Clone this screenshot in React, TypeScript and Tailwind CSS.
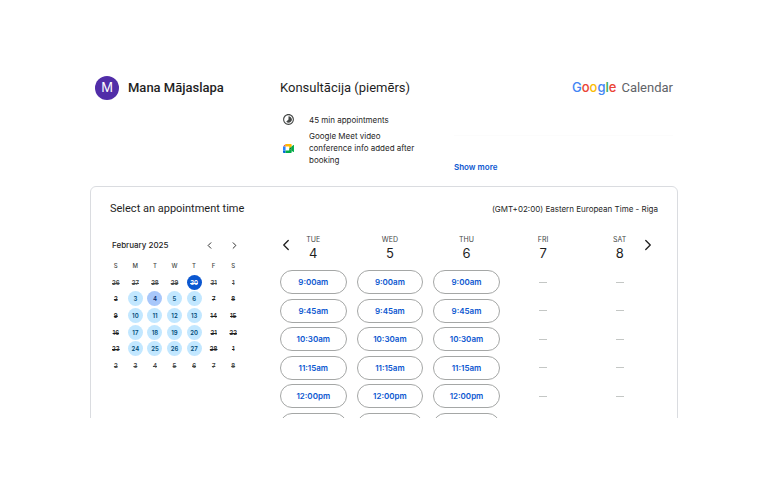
import clsx from "clsx";
import { ChevronLeft, ChevronRight } from "lucide-react";
import { MdTimelapse } from "react-icons/md";

const WEEKDAYS = ["S", "M", "T", "W", "T", "F", "S"];

const WEEKS = [
  [26, 27, 28, 29, 30, 31, 1],
  [2, 3, 4, 5, 6, 7, 8],
  [9, 10, 11, 12, 13, 14, 15],
  [16, 17, 18, 19, 20, 21, 22],
  [23, 24, 25, 26, 27, 28, 1],
  [2, 3, 4, 5, 6, 7, 8],
];

const TIMES = ["9:00am", "9:45am", "10:30am", "11:15am", "12:00pm"];

const DAYS = [
  { name: "TUE", date: 4, open: true },
  { name: "WED", date: 5, open: true },
  { name: "THU", date: 6, open: true },
  { name: "FRI", date: 7, open: false },
  { name: "SAT", date: 8, open: false },
];

export default function App() {
  return (
    <div className="flex h-screen flex-col overflow-hidden bg-white px-[90px] pt-[76px] pb-[67px] font-['Inter',sans-serif] text-[#1f1f1f]">
      <Header />
      <main className="min-h-0 flex-1 overflow-hidden">
        <section className="rounded-md border border-[#dadce0] px-[19px] pt-[11px] pb-4">
          <div className="flex items-center justify-between">
            <h2 className="font-['Roboto',sans-serif] text-[11px] leading-[22px]">
              Select an appointment time
            </h2>
            <p className="text-[8px]">
              (GMT+02:00) Eastern European Time - Riga
            </p>
          </div>
          <div className="mt-[14px] flex justify-between">
            <MonthPicker />
            <Schedule />
          </div>
        </section>
      </main>
    </div>
  );
}

function Header() {
  return (
    <header className="grid h-[110px] shrink-0 grid-cols-[185px_174px_1fr] px-[5px]">
      <div className="flex h-6 items-center gap-[9px]">
        <span className="flex size-6 items-center justify-center rounded-full bg-[#512da8] text-[13px] text-white">
          M
        </span>
        <span className="font-['Roboto',sans-serif] text-[13px] font-medium">
          Mana Mājaslapa
        </span>
      </div>

      <div>
        <h1 className="font-['Roboto',sans-serif] text-[13px] leading-6">
          Konsultācija (piemērs)
        </h1>
        <ul className="mt-[13px] space-y-1 text-[8px] leading-3">
          <li className="flex items-center">
            <MdTimelapse className="ml-[2px] size-[13px] text-[#444746]" />
            <span className="ml-[14px]">45 min appointments</span>
          </li>
          <li className="flex items-center">
            <MeetIcon />
            <span className="ml-[15px] w-[115px]">
              Google Meet video conference info added after booking
            </span>
          </li>
        </ul>
      </div>

      <div className="flex flex-col">
        <Logo />
        <div className="mt-[35px] border-t border-[#fcfcfc] pt-[25px]">
          <button
            type="button"
            className="block text-[8px] leading-3 font-semibold text-[#0b57d0]"
          >
            Show more
          </button>
        </div>
      </div>
    </header>
  );
}

function Logo() {
  return (
    <div className="flex h-6 items-center justify-end gap-[5px] text-[13px]">
      <span className="font-medium">
        <span className="text-[#4285f4]">G</span>
        <span className="text-[#ea4335]">o</span>
        <span className="text-[#fbbc04]">o</span>
        <span className="text-[#4285f4]">g</span>
        <span className="text-[#34a853]">l</span>
        <span className="text-[#ea4335]">e</span>
      </span>
      <span className="font-['Roboto',sans-serif] text-[#5f6368]">
        Calendar
      </span>
    </div>
  );
}

function MeetIcon() {
  return (
    <svg viewBox="0 0 88 72" className="ml-[3px] h-[9px] w-[11px] shrink-0">
      <path fill="#0066da" d="M0 51.5V66c0 3.3 2.7 6 6 6h14.5V51.5z" />
      <path fill="#e94235" d="M20.5 0L0 20.5h20.5z" />
      <path fill="#2684fc" d="M20.5 20.5H0v31h20.5z" />
      <path
        fill="#ffba00"
        d="M63.5 0h-43v20.5h29V36l20-16.6V6c0-3.3-2.7-6-6-6z"
      />
      <path
        fill="#00ac47"
        d="M82.6 8.7l-13.1 10.7v33.7l13.2 10.8c2 1.5 4.8.1 4.8-2.4V11c0-2.5-2.9-3.9-4.9-2.3zM49.5 36v15.5h-29V72h43c3.3 0 6-2.7 6-6V53.1z"
      />
      <path fill="#00832d" d="M49.5 36l20 17.1V19.4z" />
    </svg>
  );
}

function MonthPicker() {
  return (
    <div className="-ml-1 w-[137px] shrink-0 pt-[3px]">
      <div className="flex h-4 items-center pl-[6px]">
        <h3 className="flex-1 text-[8px] font-medium">February 2025</h3>
        <button type="button" aria-label="Previous month" className="mr-[14px]">
          <ChevronLeft className="size-[11px]" />
        </button>
        <button type="button" aria-label="Next month" className="mr-[3px]">
          <ChevronRight className="size-[11px]" />
        </button>
      </div>
      <div className="mt-1 grid h-[17px] grid-cols-7 place-items-center text-[6px] font-medium text-[#444746]">
        {WEEKDAYS.map((day, i) => (
          <span key={i}>{day}</span>
        ))}
      </div>
      <div className="grid h-[100px] grid-cols-7 grid-rows-6 place-items-center">
        {WEEKS.map((week, row) =>
          week.map((date, col) => (
            <DateCell key={`${row}-${col}`} date={date} row={row} col={col} />
          )),
        )}
      </div>
    </div>
  );
}

type DateCellProps = {
  date: number;
  row: number;
  col: number;
};

function DateCell({ date, row, col }: DateCellProps) {
  const today = row === 0 && col === 4;
  const available = row >= 1 && row <= 4 && col >= 1 && col <= 4;
  const selected = row === 1 && col === 2;

  return (
    <button
      type="button"
      disabled={!available}
      className={clsx(
        "flex size-[15px] items-center justify-center rounded-full text-[6px] font-semibold",
        !available && "line-through",
        today && "bg-[#0b57d0] text-white",
        selected && "bg-[#a8c7fa] text-[#062e6f]",
        available && !selected && "bg-[#c2e7ff] text-[#004a77]",
        (row === 0 || row === 5) && !today && "text-[#444746]",
      )}
    >
      {date}
    </button>
  );
}

const slotClass =
  "h-6 rounded-full border border-[#a5a7a6] text-[8px] font-semibold text-[#0b57d0]";

function Schedule() {
  return (
    <div className="relative w-[383px]">
      <div className="grid grid-cols-5">
        {DAYS.map((day) => (
          <div key={day.name} className="text-center">
            <div className="h-[34px]">
              <p className="text-[7px] leading-3 text-[#444746]">{day.name}</p>
              <p className="text-[13px] leading-[14px]">{day.date}</p>
            </div>
            <div className="grid h-[171px] grid-rows-6 items-center px-[5px]">
              {TIMES.map((time) =>
                day.open ? (
                  <button key={time} type="button" className={slotClass}>
                    {time}
                  </button>
                ) : (
                  <span
                    key={time}
                    className="h-px w-2 justify-self-center bg-[#c4c7c5]"
                  />
                ),
              )}
              {day.open && (
                <button
                  type="button"
                  aria-label="More times"
                  className={slotClass}
                />
              )}
            </div>
          </div>
        ))}
      </div>
      <button
        type="button"
        aria-label="Previous week"
        className="absolute top-[2px] left-[2px]"
      >
        <ChevronLeft className="size-[18px]" strokeWidth={1.75} />
      </button>
      <button
        type="button"
        aria-label="Next week"
        className="absolute top-[2px] right-px"
      >
        <ChevronRight className="size-[18px]" strokeWidth={1.75} />
      </button>
    </div>
  );
}
